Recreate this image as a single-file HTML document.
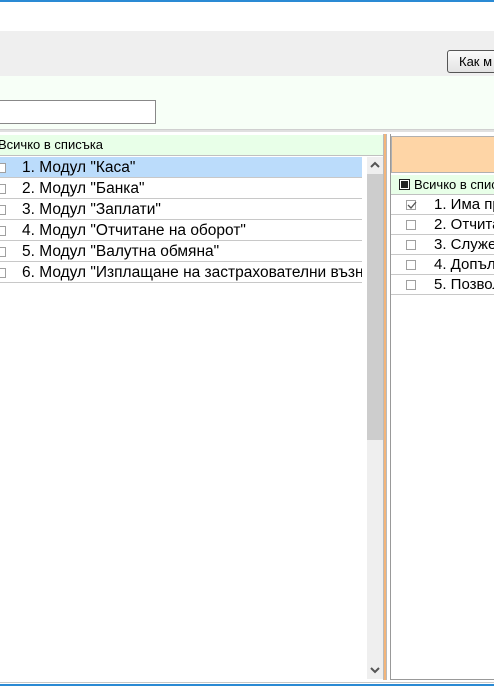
<!DOCTYPE html>
<html><head><meta charset="utf-8"><style>
*{margin:0;padding:0;box-sizing:border-box}
body{width:494px;height:686px;overflow:hidden;background:#fff;font-family:"Liberation Sans",Arial,sans-serif;position:relative}
.a{position:absolute}
.row{position:absolute;left:0;width:362px;height:21px;border-bottom:1px solid #c8c8c8;font-size:15.5px;line-height:21px;color:#000}
.row .t{position:absolute;left:22px;top:0;white-space:nowrap}
.cb{position:absolute;width:10px;height:10px;border:1px solid #a0a0a0;background:#fff}
.rrow{position:absolute;left:391px;width:103px;height:20px;border-bottom:1px solid #c8c8c8;font-size:15px;line-height:20px;overflow:hidden;white-space:nowrap}
.rrow .t{position:absolute;left:43px;top:0}
</style></head><body>
<div class="a" style="left:0;top:0;width:494px;height:2px;background:#2a8ad4"></div>
<div class="a" style="left:0;top:31px;width:494px;height:45px;background:#efefef"></div>
<div class="a" style="left:447px;top:50px;width:60px;height:23px;border:1px solid #555;border-radius:3px;background:linear-gradient(#fafafa,#e3e3e3);font-size:13px;line-height:21px;padding-left:11px">Как м</div>
<div class="a" style="left:0;top:76px;width:494px;height:53px;background:#f7fff7"></div>
<div class="a" style="left:-2px;top:100px;width:158px;height:24px;border:1px solid #888;background:#fff"></div>
<div class="a" style="left:0;top:129px;width:494px;height:3px;background:#e0e0e0;border-top:1px solid #d0d0d0"></div>
<div class="a" style="left:0;top:135px;width:383px;height:21px;background:#e8ffe8;border-bottom:1px solid #c0c0c0;font-size:13px;line-height:20px;text-indent:-2px">Всичко в списъка</div>
<div class="a" style="left:0;top:157px;width:362px;height:20px;background:#bbdcfb"></div>
<div class="row" style="top:157px"><div class="cb" style="left:-4px;top:6px"></div><span class="t">1. Модул "Каса"</span></div>
<div class="row" style="top:178px"><div class="cb" style="left:-4px;top:6px"></div><span class="t">2. Модул "Банка"</span></div>
<div class="row" style="top:199px"><div class="cb" style="left:-4px;top:6px"></div><span class="t">3. Модул "Заплати"</span></div>
<div class="row" style="top:220px"><div class="cb" style="left:-4px;top:6px"></div><span class="t">4. Модул "Отчитане на оборот"</span></div>
<div class="row" style="top:241px"><div class="cb" style="left:-4px;top:6px"></div><span class="t">5. Модул "Валутна обмяна"</span></div>
<div class="row" style="top:262px;overflow:hidden"><div class="cb" style="left:-4px;top:6px"></div><span class="t">6. Модул "Изплащане на застрахователни възн</span></div>
<div class="a" style="left:367px;top:157px;width:16px;height:522px;background:#efefef"></div>
<div class="a" style="left:367px;top:174px;width:16px;height:266px;background:#cdcdcd"></div>
<svg class="a" style="left:370px;top:161px" width="10" height="8"><path d="M1 6L5 2L9 6" stroke="#555" stroke-width="2" fill="none"/></svg>
<svg class="a" style="left:370px;top:667px" width="10" height="8"><path d="M1 1L5 5L9 1" stroke="#555" stroke-width="2" fill="none"/></svg>
<div class="a" style="left:383px;top:134px;width:1px;height:546px;background:#bbb"></div>
<div class="a" style="left:384px;top:134px;width:2px;height:546px;background:#f3b57a"></div>
<div class="a" style="left:386px;top:134px;width:1px;height:546px;background:#bbb"></div>
<div class="a" style="left:390px;top:134px;width:1px;height:546px;background:#999"></div>
<div class="a" style="left:390px;top:679px;width:104px;height:1px;background:#999"></div>
<div class="a" style="left:391px;top:136px;width:103px;height:37px;background:#fed5a6;border:1px solid #b0b0b0;border-right:none"></div>
<div class="a" style="left:391px;top:175px;width:103px;height:20px;background:#e8ffe8;border-bottom:1px solid #c0c0c0;font-size:13px;line-height:19px;white-space:nowrap;overflow:hidden"><span style="position:absolute;left:8px;top:4px;width:11px;height:11px;border:1px solid #222;background:#fff"><span style="position:absolute;left:1px;top:1px;width:7px;height:7px;background:#222"></span></span><span style="position:absolute;left:23px">Всичко в списъка</span></div>
<div class="rrow" style="top:195px"><div class="cb" style="left:15px;top:5px"></div><svg class="a" style="left:16px;top:6px" width="10" height="9"><path d="M1 4L4 7L9 1" stroke="#555" stroke-width="1.3" fill="none"/></svg><span class="t">1. Има пр</span></div>
<div class="rrow" style="top:215px"><div class="cb" style="left:15px;top:5px"></div><span class="t">2. Отчитане</span></div>
<div class="rrow" style="top:235px"><div class="cb" style="left:15px;top:5px"></div><span class="t">3. Служебен</span></div>
<div class="rrow" style="top:255px"><div class="cb" style="left:15px;top:5px"></div><span class="t">4. Допълни</span></div>
<div class="rrow" style="top:275px"><div class="cb" style="left:15px;top:5px"></div><span class="t">5. Позволи</span></div>
<div class="a" style="left:0;top:682px;width:494px;height:1px;background:#c8c8c8"></div>
<div class="a" style="left:0;top:684px;width:494px;height:2px;background:#2a8ad4"></div>
</body></html>
